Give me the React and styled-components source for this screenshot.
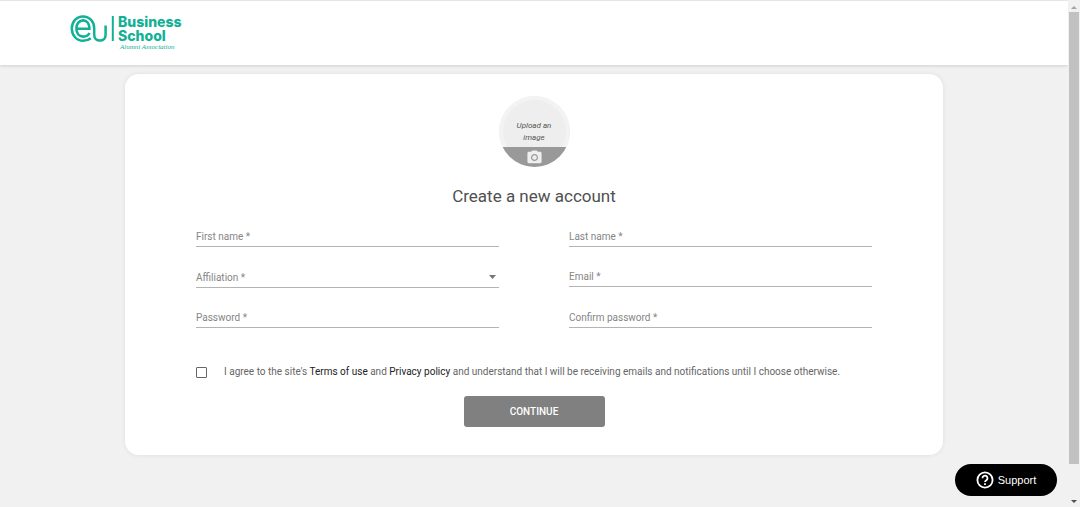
import React, { useState } from "react";
import styled, { createGlobalStyle } from "styled-components";

const fields = [
  { id: "first-name", label: "First name *", type: "text" },
  { id: "last-name", label: "Last name *", type: "text" },
  { id: "affiliation", label: "Affiliation *", type: "select" },
  { id: "email", label: "Email *", type: "email" },
  { id: "password", label: "Password *", type: "password" },
  { id: "confirm-password", label: "Confirm password *", type: "password" },
];

const Logo = () => (
  <Brand href="#">
    <svg width="45" height="28" viewBox="0 0 45 28" fill="none" stroke="#12b095">
      <path
        d="M20.8 23.2C18.6 25 16 25.8 13.2 25.8C6.6 25.8 1.8 20.4 1.8 13.5C1.8 6.6 6.6 1.4 13 1.4C19.6 1.4 24.2 6.6 24.2 13V19.5C24.2 23.4 26.6 25.6 29.9 25.6C33.2 25.6 35.6 23.4 35.6 19.5V10.5"
        strokeWidth="2.5"
      />
      <path
        d="M7.5 13.7H19.4C19.4 8.8 17 5.4 13.2 5.4C9.2 5.4 6.4 8.8 6.4 13.5C6.4 18.4 9.2 21.6 13.4 21.6C16.2 21.6 18.3 20.3 19.5 18"
        strokeWidth="2.6"
      />
      <path d="M42.8 1V26" strokeWidth="2" />
    </svg>
    <BrandText>
      <strong>
        Business
        <br />
        School
      </strong>
      <em>Alumni Association</em>
    </BrandText>
  </Brand>
);

const Field = ({ id, label, type, value, onChange }) => (
  <FieldRow $tall={type === "select"}>
    <label htmlFor={id}>{label}</label>
    {type === "select" ? (
      <>
        <select id={id} value={value} onChange={onChange}>
          <option value=""></option>
          <option value="alumni">Alumni</option>
          <option value="student">Student</option>
          <option value="staff">Staff</option>
        </select>
        <svg width="7" height="4" viewBox="0 0 7 4" fill="#757575">
          <path d="M0 0H7L3.5 4Z" />
        </svg>
      </>
    ) : (
      <input id={id} type={type} value={value} onChange={onChange} />
    )}
  </FieldRow>
);

const App = () => {
  const [values, setValues] = useState({});
  const [agreed, setAgreed] = useState(false);

  const handleChange = (id) => (event) => {
    setValues({ ...values, [id]: event.target.value });
  };

  return (
    <>
      <GlobalStyle />
      <Shell>
        <Page>
          <Header>
            <Logo />
          </Header>
          <Main>
            <Card onSubmit={(event) => event.preventDefault()}>
              <Avatar type="button">
                <span>Upload an image</span>
                <AvatarBar>
                  <svg width="17" height="17" viewBox="0 0 24 24" fill="#eeeeee">
                    <circle cx="12" cy="12" r="3.2" />
                    <path d="M9 2 7.17 4H4c-1.1 0-2 .9-2 2v12c0 1.1.9 2 2 2h16c1.1 0 2-.9 2-2V6c0-1.1-.9-2-2-2h-3.17L15 2H9zm3 15c-2.76 0-5-2.24-5-5s2.24-5 5-5 5 2.24 5 5-2.24 5-5 5z" />
                  </svg>
                </AvatarBar>
              </Avatar>
              <Title>Create a new account</Title>
              <Fields>
                {fields.map((field) => (
                  <Field
                    key={field.id}
                    {...field}
                    value={values[field.id] || ""}
                    onChange={handleChange(field.id)}
                  />
                ))}
              </Fields>
              <Terms>
                <input
                  id="agree"
                  type="checkbox"
                  checked={agreed}
                  onChange={(event) => setAgreed(event.target.checked)}
                />
                <label htmlFor="agree">
                  I agree to the site's <a href="#terms">Terms of use</a> and{" "}
                  <a href="#privacy">Privacy policy</a> and understand that I will be
                  receiving emails and notifications until I choose otherwise.
                </label>
              </Terms>
              <Continue type="submit">CONTINUE</Continue>
            </Card>
          </Main>
        </Page>
        <Scrollbar>
          <svg width="6" height="3" viewBox="0 0 6 3" fill="#a3a3a3">
            <path d="M0 3H6L3 0Z" />
          </svg>
          <Thumb />
          <svg width="6" height="3" viewBox="0 0 6 3" fill="#505050">
            <path d="M0 0H6L3 3Z" />
          </svg>
        </Scrollbar>
      </Shell>
      <Support type="button">
        <svg width="18" height="18" viewBox="0 0 18 18" fill="none" stroke="#fff" strokeWidth="1.8">
          <circle cx="9" cy="9" r="7.6" />
          <path d="M6.5 7.2a2.5 2.5 0 1 1 3.9 2c-.9.6-1.4 1-1.4 1.9" />
          <path d="M9 12.2V14" />
        </svg>
        Support
      </Support>
    </>
  );
};

const GlobalStyle = createGlobalStyle`
*{
  box-sizing:border-box;
}
body{
  margin:0;
  background-color:#f1f1f1;
  font-family:Roboto, "Liberation Sans", sans-serif;
}
button, input, select{
  font-family:inherit;
}
`;

const Shell = styled.div`
display:flex;
align-items:flex-start;
`;

const Page = styled.div`
flex:1;
min-width:0;
`;

const Header = styled.header`
display:flex;
height:65px;
padding:14px 70px 0;
background-color:#fff;
border-top:1px solid #e6e6e6;
box-shadow:0 1px 3px rgba(0, 0, 0, 0.14);
`;

const Brand = styled.a`
display:flex;
align-items:flex-start;
gap:3px;
color:#12b095;
text-decoration:none;
`;

const BrandText = styled.div`
display:flex;
flex-direction:column;
strong{
  font-family:Inter, "Liberation Sans", sans-serif;
  font-size:14px;
  font-weight:800;
  line-height:14px;
}
em{
  padding-left:2px;
  font-family:"Liberation Serif", serif;
  font-size:7px;
  line-height:9px;
}
`;

const Main = styled.main`
padding:9px 125px 40px;
`;

const Card = styled.form`
display:flex;
flex-direction:column;
align-items:center;
padding:22px 71px 28px;
border-radius:14px;
background-color:#fff;
box-shadow:0 0 5px rgba(0, 0, 0, 0.08);
`;

const Avatar = styled.button`
display:flex;
flex-direction:column;
align-items:center;
justify-content:space-between;
width:71px;
height:71px;
padding:24px 0 0;
overflow:hidden;
border:none;
border-radius:50%;
background-color:#eeeeee;
box-shadow:inset 0 0 0 4px #f3f3f3;
cursor:pointer;
span{
  width:48px;
  color:#555;
  font-size:8px;
  font-style:italic;
  font-weight:400;
  line-height:12px;
}
`;

const AvatarBar = styled.div`
display:flex;
align-items:center;
justify-content:center;
width:100%;
height:20px;
background-color:#999;
`;

const Title = styled.h1`
margin:17px 0 19px;
color:#505050;
font-size:17px;
font-weight:400;
line-height:24px;
`;

const Fields = styled.div`
display:grid;
grid-template-columns:1fr 1fr;
align-items:start;
gap:20px 70px;
width:100%;
`;

const FieldRow = styled.div`
display:flex;
align-items:center;
gap:4px;
height:${({ $tall }) => ($tall ? "21px" : "20px")};
padding-right:${({ $tall }) => ($tall ? "3px" : "0")};
border-bottom:1px solid #b4b4b4;
label{
  color:#858585;
  font-size:10px;
  line-height:19px;
}
input, select{
  flex:1;
  min-width:0;
  height:19px;
  padding:0;
  border:none;
  outline:none;
  background:none;
  color:#444;
  font-size:10px;
  appearance:none;
}
`;

const Terms = styled.div`
display:flex;
align-items:center;
gap:17px;
width:100%;
margin-top:36px;
input{
  width:11px;
  height:11px;
  margin:0;
  border:1px solid #666;
  border-radius:1px;
  appearance:none;
  &:checked{
    background-color:#808080;
  }
}
label{
  color:#666;
  font-size:10px;
  line-height:16px;
}
a{
  color:#222;
  text-decoration:none;
}
`;

const Continue = styled.button`
width:141px;
height:31px;
margin-top:16px;
border:none;
border-radius:3px;
background-color:#808080;
color:#fff;
font-size:10px;
font-weight:500;
cursor:pointer;
`;

const Scrollbar = styled.div`
position:sticky;
top:0;
display:flex;
flex-direction:column;
align-items:center;
width:12px;
height:100vh;
padding:6px 0 4px;
background-color:#f1f1f1;
`;

const Thumb = styled.div`
flex:1;
width:10px;
margin:3px 0 36px;
background-color:#c1c1c1;
`;

const Support = styled.button`
position:fixed;
right:23px;
bottom:11px;
display:flex;
align-items:center;
justify-content:center;
gap:4px;
width:102px;
height:32px;
border:none;
border-radius:16px;
background-color:#000;
color:#fff;
font-family:"Liberation Sans", sans-serif;
font-size:11px;
cursor:pointer;
`;

export default App;
